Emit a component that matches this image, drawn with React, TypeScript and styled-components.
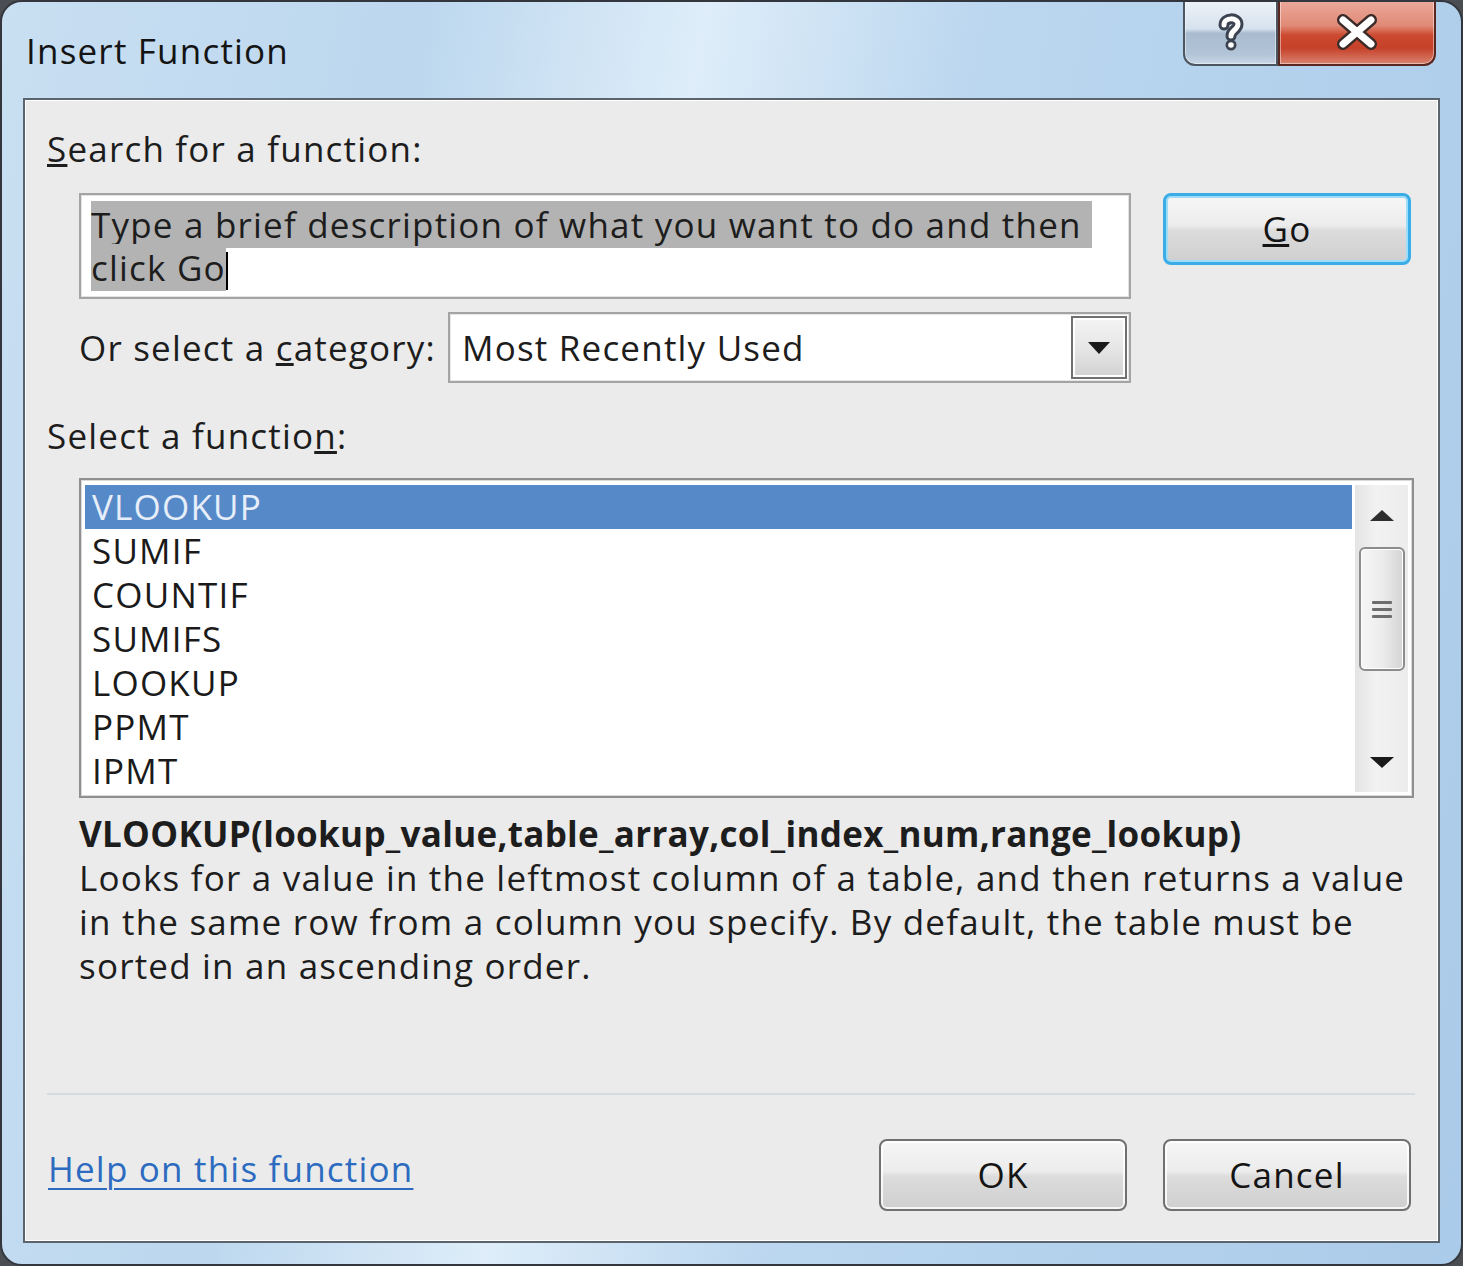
import styled, { createGlobalStyle } from "styled-components";

const GlobalStyle = createGlobalStyle`
  html, body {
    margin: 0;
    padding: 0;
    background: #4a4d52;
  }
  body {
    font-family: "Open Sans", "Noto Sans", "Liberation Sans", sans-serif;
    color: #1d1d1d;
  }
`;

const Window = styled.div`
  width: 1463px;
  height: 1266px;
  box-sizing: border-box;
  border: 2px solid #33373d;
  border-radius: 22px;
  background: linear-gradient(
      100deg,
      #c9dff2 0%,
      #bcd7ee 25%,
      #deedf9 42%,
      #bcd7ef 58%,
      #aacbe9 100%
    );
  display: flex;
  flex-direction: column;
  overflow: hidden;
`;

const TitleBar = styled.div`
  height: 96px;
  display: flex;
  justify-content: space-between;
  align-items: flex-start;
  flex-shrink: 0;
`;

const Title = styled.div`
  padding: 27px 0 0 24px;
  font-size: 35px;
  letter-spacing: 1.2px;
  line-height: 44px;
  color: #141414;
`;

const CaptionGroup = styled.div`
  display: flex;
  margin: -2px 25px 0 0;
`;

const CaptionButton = styled.div<{ $kind: "help" | "close" }>`
  height: 66px;
  width: ${(p) => (p.$kind === "help" ? "95px" : "158px")};
  box-sizing: border-box;
  display: flex;
  align-items: center;
  justify-content: center;
  border: 2px solid ${(p) => (p.$kind === "help" ? "#4d5560" : "#5a2620")};
  border-top: none;
  border-radius: ${(p) => (p.$kind === "help" ? "0 0 0 12px" : "0 0 12px 0")};
  background: ${(p) =>
    p.$kind === "help"
      ? "linear-gradient(to bottom, #eef3f9 0%, #d6e2ee 45%, #a9bbcf 52%, #b2c4d8 85%, #c9d7e6 100%)"
      : "linear-gradient(to bottom, #ecaa9c 0%, #e08a77 40%, #cc4a30 55%, #c64129 75%, #d98370 100%)"};
  box-shadow: inset 0 0 0 1px rgba(255, 255, 255, 0.45);
`;

const Client = styled.div`
  flex: 1;
  margin: 0 21px 21px 21px;
  border: 2px solid #5b636d;
  box-shadow: inset 0 0 0 1px #ffffff;
  background: #ebebeb;
  display: flex;
  flex-direction: column;
  padding: 27px 24px 30px 22px;
  font-size: 35px;
  letter-spacing: 1.2px;
  line-height: 44px;
`;

const Label = styled.div<{ $indent?: boolean }>`
  margin-left: ${(p) => (p.$indent ? "32px" : "0")};
  white-space: nowrap;
`;

const SearchRow = styled.div`
  display: flex;
  gap: 32px;
  margin: 22px 0 0 32px;
  align-items: flex-start;
`;

const SearchBox = styled.div`
  width: 1052px;
  height: 106px;
  box-sizing: border-box;
  border: 2px solid #a4a4a4;
  box-shadow: inset 0 0 0 1px #e2e2e2;
  background: #ffffff;
  padding: 8px 10px;
  line-height: 43px;
  white-space: nowrap;
`;

const Selected = styled.span<{ $tail?: boolean }>`
  background: #b3b3b3;
  padding-right: ${(p) => (p.$tail ? "10px" : "0")};
`;

const Caret = styled.span`
  display: inline-block;
  width: 2px;
  height: 38px;
  background: #000;
  vertical-align: -9px;
`;

const PushButton = styled.div<{ $focused?: boolean }>`
  width: 248px;
  height: 72px;
  box-sizing: border-box;
  border: ${(p) => (p.$focused ? "3px solid #3aace6" : "2px solid #707070")};
  border-radius: 8px;
  display: flex;
  align-items: center;
  justify-content: center;
  background: linear-gradient(
    to bottom,
    #f6f6f6 0%,
    #ececec 45%,
    #dcdcdc 52%,
    #cfcfcf 100%
  );
  box-shadow: inset 0 0 0 2px
    ${(p) => (p.$focused ? "#9fdcf7" : "rgba(255,255,255,0.8)")};
  color: #141414;
`;

const CategoryRow = styled.div`
  display: flex;
  align-items: center;
  width: 1052px;
  margin: 13px 0 0 32px;
  gap: 12px;
`;

const SelectBox = styled.div`
  flex: 1;
  height: 71px;
  box-sizing: border-box;
  border: 2px solid #a4a4a4;
  box-shadow: inset 0 0 0 1px #e6e6e6;
  background: #ffffff;
  display: flex;
  align-items: center;
  padding: 2px 2px 2px 12px;
`;

const SelectValue = styled.div`
  flex: 1;
`;

const DropButton = styled.div`
  width: 56px;
  height: 100%;
  box-sizing: border-box;
  border: 2px solid #707070;
  background: linear-gradient(to bottom, #f4f4f4 0%, #e6e6e6 50%, #d2d2d2 100%);
  box-shadow: inset 0 0 0 2px #ffffff;
  display: flex;
  align-items: center;
  justify-content: center;
`;

const FunctionLabel = styled(Label)`
  margin-top: 31px;
`;

const ListBox = styled.div`
  margin: 20px 0 0 32px;
  height: 320px;
  box-sizing: border-box;
  border: 2px solid #8f8f8f;
  box-shadow: inset 0 0 0 1px #dadada;
  background: #ffffff;
  display: flex;
  padding: 5px 4px 4px 4px;
`;

const Items = styled.div`
  flex: 1;
  display: flex;
  flex-direction: column;
`;

const Item = styled.div<{ $selected?: boolean }>`
  height: 44px;
  line-height: 44px;
  padding-left: 7px;
  background: ${(p) => (p.$selected ? "#5689c8" : "transparent")};
  color: ${(p) => (p.$selected ? "#e6eefa" : "#1a1a1a")};
`;

const ScrollBar = styled.div`
  width: 53px;
  margin-left: 3px;
  display: flex;
  flex-direction: column;
  align-items: center;
  background: linear-gradient(to right, #e4e4e4 0%, #f2f2f2 40%, #ececec 100%);
`;

const ScrollArrow = styled.div`
  height: 60px;
  width: 100%;
  display: flex;
  align-items: center;
  justify-content: center;
`;

const Thumb = styled.div`
  width: 46px;
  height: 124px;
  margin-top: 2px;
  box-sizing: border-box;
  border: 2px solid #8c8c8c;
  border-radius: 6px;
  background: linear-gradient(to right, #f6f6f6 0%, #ececec 50%, #d4d4d4 100%);
  box-shadow: inset 0 0 0 1px #ffffff;
  display: flex;
  flex-direction: column;
  align-items: center;
  justify-content: center;
  gap: 4px;
`;

const Grip = styled.div`
  width: 20px;
  height: 3px;
  background: #6d6d6d;
  border-radius: 1px;
`;

const Track = styled.div`
  flex: 1;
`;

const Signature = styled.div`
  margin: 14px 0 0 32px;
  font-weight: 700;
  letter-spacing: 0.3px;
  white-space: nowrap;
`;

const Description = styled.div`
  margin-left: 32px;
  white-space: nowrap;
`;

const Separator = styled.div`
  margin-top: auto;
  height: 2px;
  background: #d3dbe3;
  margin-right: -1px;
`;

const Footer = styled.div`
  margin-top: 44px;
  display: flex;
  align-items: center;
  gap: 36px;
  padding-right: 3px;
`;

const HelpLink = styled.a`
  margin: 0 auto 12px 1px;
  color: #2c6bc0;
  text-decoration: underline;
  text-decoration-thickness: 2px;
  text-underline-offset: 6px;
  cursor: pointer;
`;

const HelpGlyph = () => (
  <svg width="30" height="40" viewBox="0 0 30 40">
    <path
      d="M8 13 C8 5 22 5 22 12 C22 18 15 18 15 24"
      fill="none"
      stroke="#3b4350"
      strokeWidth="11"
      strokeLinecap="round"
    />
    <circle cx="15" cy="33" r="5.5" fill="#3b4350" />
    <path
      d="M8 13 C8 5 22 5 22 12 C22 18 15 18 15 24"
      fill="none"
      stroke="#ffffff"
      strokeWidth="5"
      strokeLinecap="round"
    />
    <circle cx="15" cy="33" r="2.8" fill="#ffffff" />
  </svg>
);

const CloseGlyph = () => (
  <svg width="46" height="36" viewBox="0 0 46 36">
    <path
      d="M9 6 L37 30 M37 6 L9 30"
      stroke="#3a2a28"
      strokeWidth="12"
      strokeLinecap="round"
    />
    <path
      d="M9 6 L37 30 M37 6 L9 30"
      stroke="#ffffff"
      strokeWidth="7"
      strokeLinecap="round"
    />
  </svg>
);

const Triangle = ({ dir, w, h }: { dir: "up" | "down"; w: number; h: number }) => (
  <svg width={w} height={h} viewBox={`0 0 ${w} ${h}`}>
    <polygon
      points={dir === "up" ? `0,${h} ${w / 2},0 ${w},${h}` : `0,0 ${w},0 ${w / 2},${h}`}
      fill={dir === "up" ? "#2e2e2e" : "#1a1a1a"}
    />
  </svg>
);

const functions = ["VLOOKUP", "SUMIF", "COUNTIF", "SUMIFS", "LOOKUP", "PPMT", "IPMT"];

export default function App() {
  return (
    <>
      <GlobalStyle />
      <Window>
        <TitleBar>
          <Title>Insert Function</Title>
          <CaptionGroup>
            <CaptionButton $kind="help">
              <HelpGlyph />
            </CaptionButton>
            <CaptionButton $kind="close">
              <CloseGlyph />
            </CaptionButton>
          </CaptionGroup>
        </TitleBar>

        <Client>
          <Label>
            <u>S</u>earch for a function:
          </Label>

          <SearchRow>
            <SearchBox>
              <Selected $tail>Type a brief description of what you want to do and then</Selected>
              <br />
              <Selected>click Go</Selected>
              <Caret />
            </SearchBox>
            <PushButton $focused>
              <span>
                <u>G</u>o
              </span>
            </PushButton>
          </SearchRow>

          <CategoryRow>
            <Label>
              Or select a <u>c</u>ategory:
            </Label>
            <SelectBox>
              <SelectValue>Most Recently Used</SelectValue>
              <DropButton>
                <Triangle dir="down" w={22} h={12} />
              </DropButton>
            </SelectBox>
          </CategoryRow>

          <FunctionLabel>
            Select a functio<u>n</u>:
          </FunctionLabel>

          <ListBox>
            <Items>
              {functions.map((name, i) => (
                <Item key={name} $selected={i === 0}>
                  {name}
                </Item>
              ))}
            </Items>
            <ScrollBar>
              <ScrollArrow>
                <Triangle dir="up" w={24} h={11} />
              </ScrollArrow>
              <Thumb>
                <Grip />
                <Grip />
                <Grip />
              </Thumb>
              <Track />
              <ScrollArrow>
                <Triangle dir="down" w={24} h={11} />
              </ScrollArrow>
            </ScrollBar>
          </ListBox>

          <Signature>VLOOKUP(lookup_value,table_array,col_index_num,range_lookup)</Signature>
          <Description>
            Looks for a value in the leftmost column of a table, and then returns a value
            <br />
            in the same row from a column you specify. By default, the table must be
            <br />
            sorted in an ascending order.
          </Description>

          <Separator />

          <Footer>
            <HelpLink>Help on this function</HelpLink>
            <PushButton>OK</PushButton>
            <PushButton>Cancel</PushButton>
          </Footer>
        </Client>
      </Window>
    </>
  );
}
